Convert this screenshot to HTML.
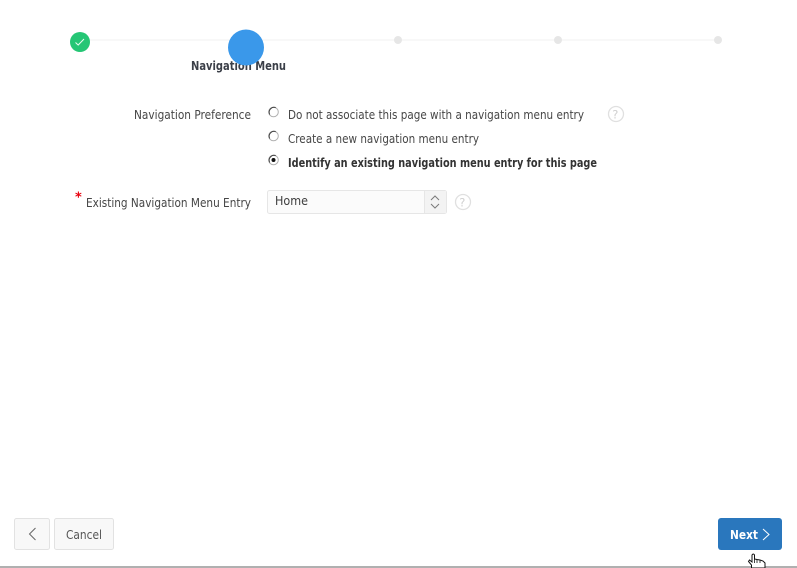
<!DOCTYPE html>
<html><head><meta charset="utf-8"><style>
html,body{margin:0;padding:0;background:#fff}
body{width:797px;height:568px;overflow:hidden;position:relative}
svg{position:absolute;left:0;top:0}
text{font-family:"DejaVu Sans",sans-serif;font-size:12.3px;fill:#464646}
.b{font-weight:bold}
</style></head><body>
<svg width="797" height="568" viewBox="0 0 797 568" xmlns="http://www.w3.org/2000/svg">
<rect x="80" y="39" width="640" height="2" fill="#f8f8f8"/>
<circle cx="80" cy="42" r="10" fill="#25c675"/>
<path d="M75.500 42.500L78.200 45L84 39" fill="none" stroke="#eafaf2" stroke-width="1"/>
<circle cx="398" cy="40" r="4" fill="#e6e6e6"/>
<circle cx="558" cy="40" r="4" fill="#e6e6e6"/>
<circle cx="718" cy="40" r="4" fill="#e6e6e6"/>
<text x="191" y="70" class="b" textLength="95" lengthAdjust="spacingAndGlyphs" style="fill:#3b3f48">Navigation Menu</text>
<circle cx="246" cy="47.500" r="18" fill="#3a98ea"/>

<text x="134" y="119" textLength="117" lengthAdjust="spacingAndGlyphs">Navigation Preference</text>
<text x="288" y="119" textLength="296" lengthAdjust="spacingAndGlyphs">Do not associate this page with a navigation menu entry</text>
<text x="288" y="143" textLength="191" lengthAdjust="spacingAndGlyphs">Create a new navigation menu entry</text>
<text x="288" y="167" class="b" textLength="309" lengthAdjust="spacingAndGlyphs" style="fill:#333">Identify an existing navigation menu entry for this page</text>
<text x="86" y="207" textLength="165" lengthAdjust="spacingAndGlyphs">Existing Navigation Menu Entry</text>
<text x="75" y="201.500" style="fill:#e8000d;font-size:13px;font-weight:bold">*</text>

<g fill="#fff" stroke="#b0b0b0">
<circle cx="273.500" cy="112" r="4.800"/>
<circle cx="273.500" cy="136" r="4.800"/>
<circle cx="273.500" cy="160" r="4.800"/>
</g>
<path d="M269.700 114.500a5 5 0 0 1 6-7" fill="none" stroke="#444" stroke-width="1"/>
<path d="M269.700 138.500a5 5 0 0 1 6-7" fill="none" stroke="#444" stroke-width="1"/>
<path d="M269.700 162.500a5 5 0 0 1 6-7" fill="none" stroke="#444" stroke-width="1"/>
<circle cx="273.500" cy="160" r="2" fill="#111"/>

<g fill="#fff" stroke="#e0e0e0" stroke-width="1.300">
<circle cx="616" cy="114" r="7.500"/>
<circle cx="463" cy="202" r="7.500"/>
</g>
<text x="612.300" y="118.500" style="font-size:11.500px;fill:#d0d0d0">?</text>
<text x="459.300" y="206.500" style="font-size:11.500px;fill:#d0d0d0">?</text>

<rect x="267.500" y="190.500" width="179" height="23" rx="2" fill="#fbfbfb" stroke="#e6e6e6"/>
<rect x="425" y="191" width="21" height="22" fill="#f3f3f3"/>
<path d="M424.500 191V213" stroke="#e6e6e6"/>
<path d="M431 200L435 196L439 200M431 204L435 208L439 204" fill="none" stroke="#7a7a7a" stroke-width="1"/>
<text x="275" y="205" textLength="33" lengthAdjust="spacingAndGlyphs" style="fill:#3d3d3d">Home</text>

<rect x="14.500" y="518.500" width="35" height="31" rx="2" fill="#f8f8f8" stroke="#e2e2e2"/>
<path d="M35.500 528L29.500 534L35.500 540" fill="none" stroke="#666" stroke-width="1"/>
<rect x="54.500" y="518.500" width="59" height="31" rx="2" fill="#f8f8f8" stroke="#e2e2e2"/>
<text x="66" y="539" textLength="36" lengthAdjust="spacingAndGlyphs" style="fill:#555">Cancel</text>

<rect x="0" y="566" width="797" height="2" fill="#b0b0b0"/>

<rect x="718" y="518" width="64" height="32" rx="3" fill="#2a77bd"/>
<text x="730" y="539" class="b" textLength="28" lengthAdjust="spacingAndGlyphs" style="fill:#fff">Next</text>
<path d="M763 529L769 534.500L763 540" fill="none" stroke="#fff" stroke-width="1"/>

<path d="M751.500 568V565L748.500 561.500L749.500 560L752 562V555Q753.500 553 754.500 555V559L757 559.500L760 560L763 561L765 563V568Z" fill="#fff" stroke="#111" stroke-width="1"/>
<path d="M754.500 559V563M757 559.500V563M760 560V563" stroke="#111" stroke-width=".8" fill="none"/>
</svg>
</body></html>
